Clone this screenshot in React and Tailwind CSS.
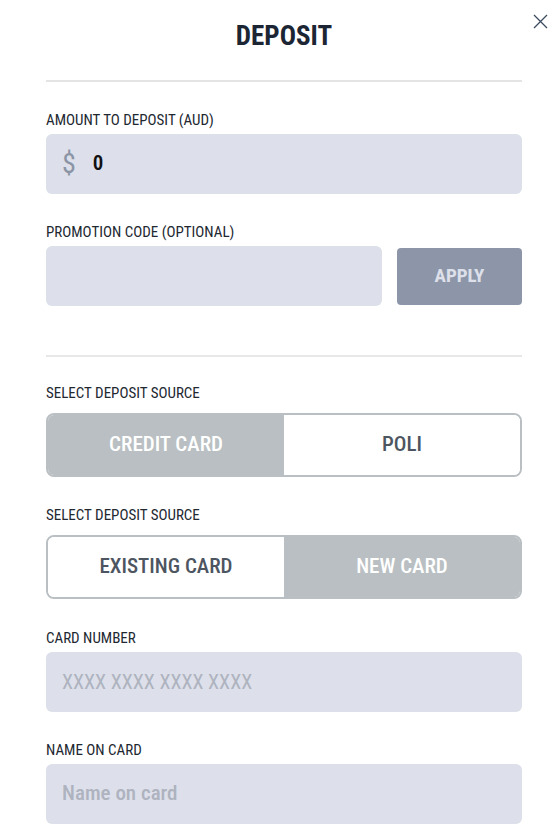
import { useState } from "react";

function Label({ children, className = "" }) {
  return <div className={`text-[15px] leading-5 text-[#222831] ${className}`}>{children}</div>;
}

function Toggle({ options, value, onChange }) {
  return (
    <div className="flex h-16 rounded-lg border-2 border-[#b9bfc2] overflow-hidden">
      {options.map((o) => (
        <button
          key={o}
          onClick={() => onChange(o)}
          className={`flex-1 flex items-center justify-center text-[21px] font-medium ${
            value === o ? "bg-[#b9bfc2] text-white" : "bg-white text-[#4d5561]"
          }`}
        >
          {o}
        </button>
      ))}
    </div>
  );
}

export default function App() {
  const [source, setSource] = useState("CREDIT CARD");
  const [card, setCard] = useState("NEW CARD");

  return (
    <div className="relative min-h-[828px] bg-white pl-[46px] pr-[27px] pt-[22px] font-['Roboto_Condensed','DejaVu_Sans_Condensed',sans-serif]">
      <button className="absolute right-[1px] top-[14px] text-[#3d4b5e]">
        <svg width="15" height="15" viewBox="0 0 15 15" fill="none" stroke="currentColor" strokeWidth="1.3">
          <path d="M1 1L14 14M14 1L1 14" />
        </svg>
      </button>

      <h1 className="text-center text-[27px] leading-7 font-bold text-[#1c2533]">DEPOSIT</h1>
      <div className="mt-[30px] h-[2px] bg-[#e4e4e4]" />

      <Label className="mt-7 mb-1">AMOUNT TO DEPOSIT (AUD)</Label>
      <div className="h-[60px] rounded-md bg-[#dde0ea] flex items-center pl-4 gap-[17px]">
        <span className="text-[28px] text-[#8b94a5]">$</span>
        <span className="text-[21px] font-semibold text-[#111]">0</span>
      </div>

      <Label className="mt-7 mb-1">PROMOTION CODE (OPTIONAL)</Label>
      <div className="flex items-center gap-[15px]">
        <div className="flex-1 h-[60px] rounded-md bg-[#dde0ea]" />
        <button className="w-[125px] h-[57px] rounded bg-[#8d96a8] text-[#dde0ea] text-[19px] font-bold">
          APPLY
        </button>
      </div>

      <div className="mt-[49px] h-[2px] bg-[#e8e8e8]" />

      <Label className="mt-[26px] mb-[10px] text-[#4a4f57]">SELECT DEPOSIT SOURCE</Label>
      <Toggle options={["CREDIT CARD", "POLI"]} value={source} onChange={setSource} />

      <Label className="mt-7 mb-[10px] text-[#4a4f57]">SELECT DEPOSIT SOURCE</Label>
      <Toggle options={["EXISTING CARD", "NEW CARD"]} value={card} onChange={setCard} />

      <Label className="mt-[29px] mb-1">CARD NUMBER</Label>
      <div className="h-[60px] rounded-md bg-[#dde0ea] flex items-center pl-4 text-[20px] text-[#aeb3bf]">
        XXXX XXXX XXXX XXXX
      </div>

      <Label className="mt-7 mb-1">NAME ON CARD</Label>
      <div className="h-[60px] rounded-md bg-[#dde0ea] flex items-center pl-4 text-[21px] font-medium text-[#aeb3bf]">
        Name on card
      </div>
    </div>
  );
}
